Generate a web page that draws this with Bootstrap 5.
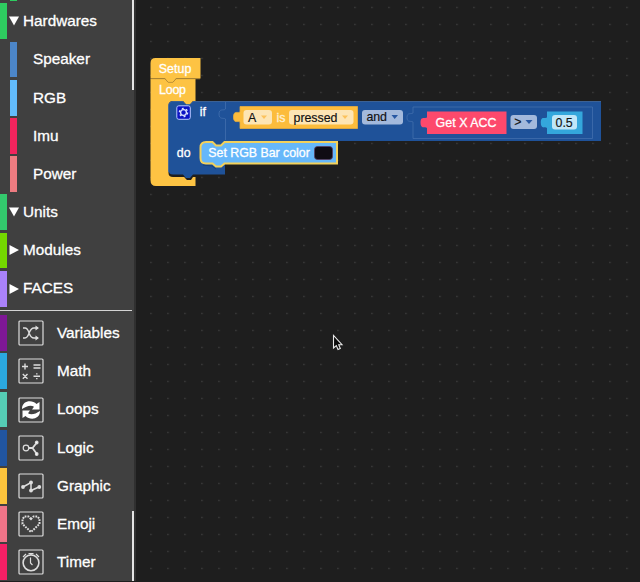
<!DOCTYPE html>
<html lang="en">
<head>
<meta charset="utf-8">
<title>Block editor</title>
<link href="https://cdn.jsdelivr.net/npm/bootstrap@5.3.0/dist/css/bootstrap.min.css" rel="stylesheet">
<style>
body{background:#1e1e1e;font-family:"Liberation Sans",Arial,sans-serif;height:582px}
.toolbox{width:136px;height:581px;background:#404040;color:#fff;border-right:2px solid #303030;position:relative}
.cat{height:35.8px;margin-bottom:2.4px;font-size:15.3px;line-height:1;-webkit-text-stroke:.3px #fff}
.cat span{padding-bottom:1px}
.swatch{width:7px;flex:none}
.sub{padding-left:10px}
.sub .label{padding-left:16px}
.arrow{width:10px;height:10px;margin:0 4px 0 2px;flex:none;fill:#fff}
.tile{width:26px;height:26px;margin:0 13px 0 11px;flex:none;fill:none;stroke:#ddd;stroke-width:1.2}
.rule{height:1.3px;width:132px;background:#d4d4d4;margin:3.2px 0 4.3px}
.thumb{position:absolute;left:131.5px;width:4.5px;background:#e4e4e4}
.stage text{font-size:12.4px;fill:#fff;stroke:#fff;stroke-width:.3px}
.stage text.dk{fill:#111;stroke:#111;stroke-width:.15px}
.c-green{background:#2ecc60}.c-blue{background:#4c86c8}.c-sky{background:#62bbfb}.c-red{background:#f1245d}
.c-salmon{background:#ee7c81}.c-teal{background:#33c96d}.c-lime{background:#74d900}.c-violet{background:#aa82fa}
.c-purple{background:#7e1895}.c-cyan{background:#2ba8df}.c-mint{background:#55ccb4}.c-navy{background:#2155a0}
.c-amber{background:#fdc43c}.c-pink{background:#ef7488}.c-rose{background:#f51f65}
</style>
<script src="https://cdn.jsdelivr.net/npm/bootstrap@5.3.0/dist/js/bootstrap.bundle.min.js"></script>
</head>
<body class="d-flex overflow-hidden m-0">
<nav class="toolbox flex-shrink-0 overflow-hidden">
<div class="c-green" style="height:1px;width:7px;margin:0 0 2.4px 10px"></div>
<div class="cat d-flex align-items-center"><i class="swatch h-100 c-green"></i><svg class="arrow" viewBox="0 0 10 10"><path d="M0 .5H10L5 9.500Z"/></svg><span class="label">Hardwares</span></div>
<div class="cat sub d-flex align-items-center"><i class="swatch h-100 c-blue"></i><span class="label">Speaker</span></div>
<div class="cat sub d-flex align-items-center"><i class="swatch h-100 c-sky"></i><span class="label">RGB</span></div>
<div class="cat sub d-flex align-items-center"><i class="swatch h-100 c-red"></i><span class="label">Imu</span></div>
<div class="cat sub d-flex align-items-center"><i class="swatch h-100 c-salmon"></i><span class="label">Power</span></div>
<div class="cat d-flex align-items-center"><i class="swatch h-100 c-teal"></i><svg class="arrow" viewBox="0 0 10 10"><path d="M0 .5H10L5 9.500Z"/></svg><span class="label">Units</span></div>
<div class="cat d-flex align-items-center"><i class="swatch h-100 c-lime"></i><svg class="arrow" viewBox="0 0 10 10"><path d="M.5 0V10L10 5Z"/></svg><span class="label">Modules</span></div>
<div class="cat d-flex align-items-center"><i class="swatch h-100 c-violet"></i><svg class="arrow" viewBox="0 0 10 10"><path d="M.5 0V10L10 5Z"/></svg><span class="label">FACES</span></div>
<div class="rule"></div>
<div class="cat d-flex align-items-center"><i class="swatch h-100 c-purple"></i><svg class="tile" viewBox="0 0 26 26"><rect x="1" y="1" width="24" height="24" rx="1"/><path d="M5 8H7C12 8 10 18 16 18H20M5 18H7C12 18 10 8 16 8H20" stroke-width="1.400"/><path d="M17.500 5.500L21 8L17.500 10.500ZM17.500 15.500L21 18L17.500 20.500Z" fill="#ddd" stroke="none"/></svg><span>Variables</span></div>
<div class="cat d-flex align-items-center"><i class="swatch h-100 c-cyan"></i><svg class="tile" viewBox="0 0 26 26"><rect x="1" y="1" width="24" height="24" rx="1"/><path d="M4 8.500H10M7 5.500V11.500M15.500 7H22.500M15.500 10H22.500M4.800 16L9.500 20.700M9.500 16L4.800 20.700M15.500 18.300H22M18.800 15.300V16.500M18.800 20V21.200" stroke-width="1.400"/></svg><span>Math</span></div>
<div class="cat d-flex align-items-center"><i class="swatch h-100 c-mint"></i><svg class="tile" viewBox="0 0 26 26"><rect x="1" y="1" width="24" height="24" rx="1"/><path d="M4 12C4 3.500 14 2.500 18.500 7L21.500 5V12.500H14L16 9.800C13 7.500 8.500 9 4 12ZM22 14C22 22.500 12 23.500 7.500 19L4.500 21V13.500H12L10 16.200C13 18.500 17.500 17 22 14Z" fill="#fff" stroke="none"/></svg><span>Loops</span></div>
<div class="cat d-flex align-items-center"><i class="swatch h-100 c-navy"></i><svg class="tile" viewBox="0 0 26 26"><rect x="1" y="1" width="24" height="24" rx="1"/><circle cx="8" cy="13" r="2.800"/><path d="M11 13H14.500L18.500 8M14.500 13L18.500 18.500" stroke-width="1.800"/><circle cx="18.700" cy="7.500" r="1.300" fill="#fff"/><circle cx="18.700" cy="19" r="1.300" fill="#fff"/></svg><span>Logic</span></div>
<div class="cat d-flex align-items-center"><i class="swatch h-100 c-amber"></i><svg class="tile" viewBox="0 0 26 26"><rect x="1" y="1" width="24" height="24" rx="1"/><path d="M5 14L13 9.500V17.500L21 14" stroke-width="1.500"/><g fill="#ddd" stroke="none"><circle cx="5" cy="14" r="1.900"/><circle cx="13" cy="9.500" r="1.900"/><circle cx="13" cy="17.500" r="1.900"/><circle cx="21.300" cy="14" r="1.900"/></g></svg><span>Graphic</span></div>
<div class="cat d-flex align-items-center"><i class="swatch h-100 c-pink"></i><svg class="tile" viewBox="0 0 26 26"><rect x="1" y="1" width="24" height="24" rx="1"/><path d="M13 8L10.500 5.500H6.500L4.500 8V13L13 21L21.500 13V8L19.500 5.500H15.500Z" stroke-width="2" stroke-dasharray="1.800 1"/></svg><span>Emoji</span></div>
<div class="cat d-flex align-items-center"><i class="swatch h-100 c-rose"></i><svg class="tile" viewBox="0 0 26 26"><rect x="1" y="1" width="24" height="24" rx="1"/><circle cx="13" cy="13.800" r="7.900" stroke-width="1.600"/><path d="M12.500 8.500V14L14.500 16M10.500 4.500H15.500M5 8L8 5M18 5L21 8"/></svg><span>Timer</span></div>
<div class="thumb" style="top:0;height:89.500px"></div>
<div class="thumb" style="top:511px;height:70px"></div>
</nav>
<svg class="stage flex-shrink-0" width="504" height="582" viewBox="136 0 504 582">
<defs>
<pattern id="dots" x="14.200" y="6.800" width="17" height="17" patternUnits="userSpaceOnUse"><rect width="1.500" height="1.200" fill="#424242"/></pattern>
</defs>
<rect x="136" width="504" height="582" fill="#1e1e1e"/>
<rect x="144" width="496" height="582" fill="url(#dots)"/>
<!-- event blocks -->
<path d="M150.500 78.500V63Q150.500 58 155.500 58H200.500V78.500H176L173 82H168L165 78.500Z" fill="#fdc343"/>
<path d="M150.500 79H165L168 82.300H173L176 79H195.500V101H193L190 104.500H186L183 101H173Q168.500 101 168.500 106V173Q168.500 177 173 177H184L187 180H191L193 177H195.500V186H156Q150.500 186 150.500 180Z" fill="#fdc343"/>
<path d="M150.500 78.800H165L168 82.300H173L176 78.800H200" fill="none" stroke="#c99a38" stroke-width=".7"/>
<!-- conditional block -->
<path d="M168.500 106Q168.500 101.500 173 101.500H183L186 104.500H190L193 101.500H601V141H225V174.500H193L190 178H186L183 174.500H173Q168.500 174.500 168.500 170Z" fill="#1f5299"/>
<path d="M168.500 172V106Q168.500 101.500 173 101.500H183L186 104.500H190L193 101.500H601" fill="none" stroke="#4872ac" stroke-width=".7"/>
<path d="M225.500 140V119C224 117.500 219 120 219 114C219 108 224 111 225.500 109V102M413 107H592.500V138.500H413V122C411 120.500 407 123 407 117.500C407 112 411 114.500 413 113V107" fill="none" stroke="#4672b0" stroke-width=".7"/>
<path d="M203 165L212 166L216 169" fill="none" stroke="#17407c"/>
<rect x="176.800" y="105.800" width="13.500" height="13.500" rx="2" fill="#0c13c4" stroke="#bac8ff"/>
<circle cx="183.500" cy="112.500" r="2.900" fill="none" stroke="#dfe6ff" stroke-width="1.300"/>
<circle cx="183.500" cy="112.500" r="4.100" fill="none" stroke="#dfe6ff" stroke-width="1.400" stroke-dasharray="1.900 2.394"/>
<!-- button state -->
<path d="M240 106.500H357.500V128.500H240V122C238 120.500 233.500 124 233.500 117C233.500 110 238 113.500 240 112Z" fill="#fcbc3c" stroke="#e7ad3d" stroke-width=".8"/>
<rect x="243.500" y="110" width="28.500" height="14.500" rx="3" fill="#fde5b4"/>
<rect x="289" y="110" width="64.500" height="14.500" rx="3" fill="#fde5b4"/>
<rect x="362" y="110" width="41" height="14.500" rx="3" fill="#a3b9dc"/>
<path d="M261 115.500H267L264 119ZM342 115.500H348L345 119Z" fill="#fcc25b"/>
<path d="M391.500 115H398L394.700 119Z" fill="#2858a3"/>
<!-- comparison -->
<path d="M427 111.500H506.500V134H427V128C425 126.500 420.500 129.500 420.500 122.500C420.500 115.500 425 119 427 117.500Z" fill="#fd496c"/>
<rect x="510.500" y="115" width="26.500" height="14" rx="3" fill="#a3b9dc"/>
<path d="M525.500 120H532.500L529 124Z" fill="#2858a3"/>
<path d="M547 111.500H582.500V134H547V128C545 126.500 540.800 129.500 540.800 122.500C540.800 115.500 545 119 547 117.500Z" fill="#34a7dc"/>
<rect x="552" y="115" width="25" height="14.500" rx="3" fill="#bfe6f8"/>
<!-- selected light block -->
<path d="M200.500 147.500Q200.500 142 206 142H212.500L216 145.500H221L224.500 142H337V163.500H224.500L221 166.500H216L212.500 163.500H206Q200.500 163.500 200.500 158Z" fill="#66b7fa" stroke="#f3d15b" stroke-width="2"/>
<rect x="314.500" y="146.500" width="18" height="13" rx="3" fill="#100c14" stroke="#583c61" stroke-width=".8"/>
<text x="158.800" y="72.800" textLength="32.500">Setup</text>
<text x="159" y="94.300" textLength="27">Loop</text>
<text x="199.800" y="116">if</text>
<text x="176.800" y="156.500">do</text>
<text class="dk" x="248" y="121.500">A</text>
<text x="276.500" y="121.500" style="fill:#fff0d0;stroke:#fff0d0">is</text>
<text class="dk" x="293.500" y="121.500" textLength="44">pressed</text>
<text class="dk" x="366.500" y="120.500" textLength="20.500">and</text>
<text x="435.500" y="126.500" textLength="61">Get X ACC</text>
<text class="dk" x="514.300" y="126">&gt;</text>
<text class="dk" x="555.500" y="126.500">0.5</text>
<text x="208.300" y="157" textLength="101.500">Set RGB Bar color</text>
<path d="M333.500 335.500V348L336.300 345.600L338 349.500L340.300 348.500L338.700 344.700H342Z" fill="#0b0b0b" stroke="#e8e8e8" stroke-width="1.100"/>
</svg>
</body>
</html>
